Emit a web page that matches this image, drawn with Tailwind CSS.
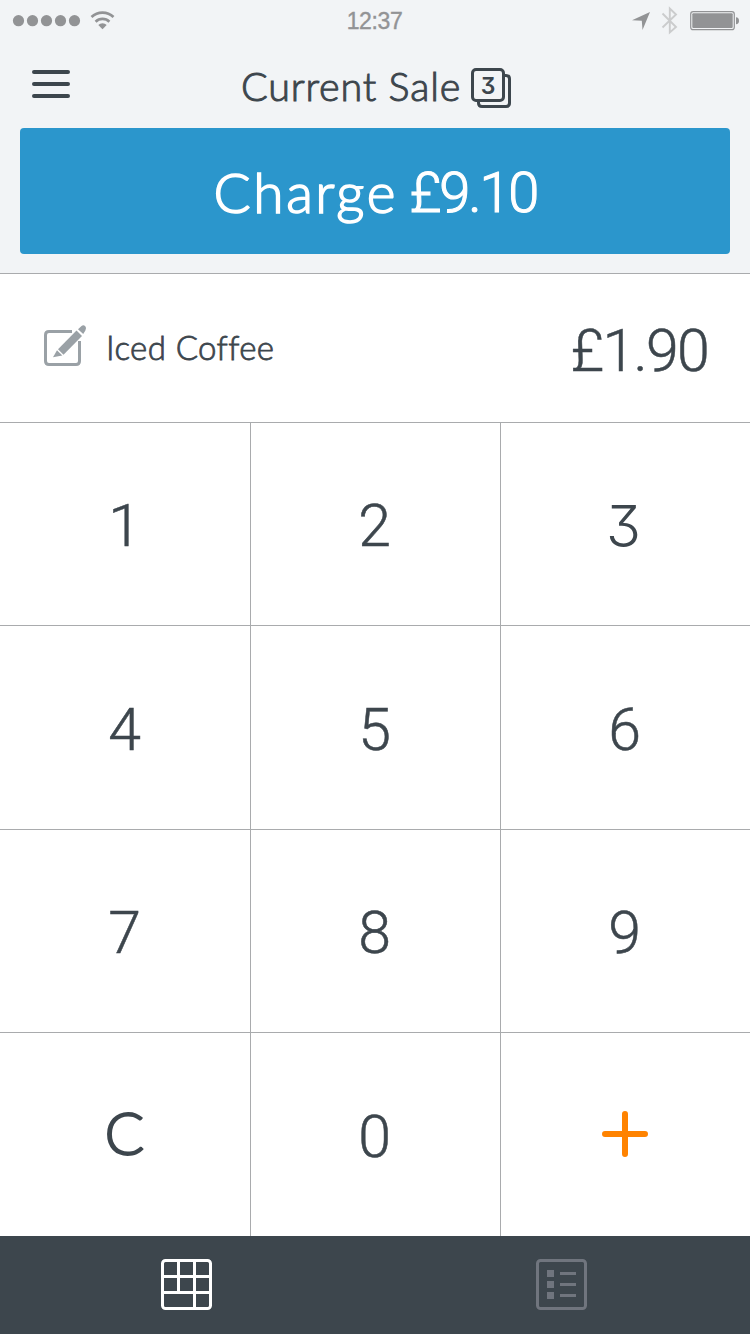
<!DOCTYPE html>
<html lang="en">
<head>
<meta charset="utf-8">
<title>Current Sale</title>
<script src="https://cdn.jsdelivr.net/npm/@tailwindcss/browser@4"></script>
</head>
<body class="w-[750px] h-[1334px] overflow-hidden bg-white flex flex-col text-[#3d464d] font-['Lato',sans-serif]">
  <header class="h-[274px] shrink-0 bg-[#f2f4f6] border-b border-[#a9abad] flex flex-col">
    <div class="h-10 grid grid-cols-3 items-center">
      <svg class="block" width="130" height="40" fill="#929395">
        <circle cx="18.5" cy="20.7" r="5.6"/><circle cx="32.5" cy="20.7" r="5.6"/><circle cx="46.5" cy="20.7" r="5.6"/><circle cx="60.5" cy="20.7" r="5.6"/><circle cx="74.5" cy="20.7" r="5.6"/>
        <path d="M91.500 17A16 16 0 0 1 113.500 17M95.600 21.700A10 10 0 0 1 109.400 21.700" fill="none" stroke="#929395" stroke-width="2.700"/>
        <path d="M98.300 25A6 6 0 0 1 106.700 25L102.500 29.200Z"/>
      </svg>
      <div class="h-10 leading-10 text-center text-[23px] text-[#929395] font-['Liberation_Sans',sans-serif] [-webkit-text-stroke:0.4px_#929395] tracking-[-0.4px] pt-[1px] pr-[1px]">12:37</div>
      <svg class="block justify-self-end" width="130" height="40" viewBox="620 0 130 40">
        <path d="M650 12L632 20.200L641.800 20.700L642.500 30Z" fill="#929395"/>
        <path d="M662.500 13.500L676 27L669.800 32.500V8.500L676 14.500L662.500 27.500" fill="none" stroke="#cbcccd" stroke-width="1.900"/>
        <rect x="690.700" y="11.700" width="43.600" height="18" rx="2.500" fill="none" stroke="#929395" stroke-width="1.200"/>
        <rect x="692.300" y="13.300" width="40.400" height="14.800" rx="1" fill="#929395"/>
        <path d="M736 17.200Q739 17.600 739 20.700Q739 23.800 736 24.200Z" fill="#929395"/>
      </svg>
    </div>
    <div class="h-[88px] flex items-center">
      <svg class="block w-[209px] h-[88px] shrink-0" viewBox="0 40 209 88" stroke="#3d464d" stroke-width="4" stroke-linecap="round"><path d="M34 72H68M34 84H68M34 96H68"/></svg>
      <h1 class="w-[262px] h-[88px] leading-[92px] pl-[32px] text-[39.500px] font-light tracking-[0.8px] [-webkit-text-stroke:1px_#3d464d] whitespace-nowrap">Current Sale</h1>
      <div class="relative w-10 h-10 mt-[7px] shrink-0">
        <svg class="block" width="40" height="40" fill="none" stroke="#3d464d" stroke-width="3"><rect x="1.500" y="1.500" width="31" height="31" rx="3.500"/><path d="M34 7.500H35Q38.500 7.500 38.500 11V35Q38.500 38.500 35 38.500H11Q7.500 38.500 7.500 35V34"/></svg>
        <span class="absolute left-0 top-0 w-[34px] h-[34px] leading-[36px] text-center text-[23px] font-semibold font-['Inter',sans-serif] [font-feature-settings:'cv09']">3</span>
      </div>
    </div>
    <button class="flex justify-center mx-5 h-[126px] rounded bg-[#2b96cc] text-white text-[55px] leading-[128px] whitespace-pre"><span class="w-[196px] font-light tracking-[2.600px] [-webkit-text-stroke:1.600px_white] text-left">Charge</span><span class="w-[127px] leading-[130px] text-[56px] text-left font-['Roboto',sans-serif] font-light tracking-[-2.200px] [-webkit-text-stroke:1.1px_white]">£9.10</span></button>
  </header>

  <section class="h-[148px] shrink-0 flex items-center justify-between pl-11 pr-[42px]">
    <div class="flex items-center">
      <svg class="block mb-1" width="44" height="44" viewBox="44 324 44 44" fill="none">
        <path d="M72 331.500H49Q45.500 331.500 45.500 335V361Q45.500 364.500 49 364.500H76Q79.500 364.500 79.500 361V341" stroke="#9aa1a6" stroke-width="3"/>
        <path d="M58 349.300L76.500 330.500L82 336L63.500 354.800Z" fill="#9aa1a6"/>
        <path d="M57 350.200L62.300 355.500L53 357.200Z" fill="#9aa1a6"/>
        <path d="M78 329.200L81.500 325.900Q83.500 324.300 85.300 326.300Q87 328.400 85.400 330.400L83.200 334Z" fill="#9aa1a6"/>
      </svg>
      <span class="ml-[18px] text-[33px] leading-[146px] h-[148px] font-light tracking-[0.4px] [-webkit-text-stroke:0.8px_#3d464d]">Iced Coffee</span>
    </div>
    <span class="text-[59px] leading-[154px] h-[148px] font-light font-['Roboto',sans-serif] tracking-[-1.700px] [-webkit-text-stroke:0.5px_#3d464d]">£1.90</span>
  </section>

  <main class="h-[814px] shrink-0 grid grid-cols-[250px_250px_250px] grid-rows-[203px_204px_203px_204px] text-[59px] font-light font-['Roboto',sans-serif] text-center [-webkit-text-stroke:0.5px_#3d464d]">
    <div class="border-t border-[#a9abad] leading-[206px] pr-[1px]">1</div>
    <div class="border-t border-l border-[#a9abad] leading-[206px] pr-[2px]">2</div>
    <div class="border-t border-l border-[#a9abad] leading-[206px] pr-[4px] text-[57.500px] font-['Inter',sans-serif] [font-feature-settings:'cv09'] [-webkit-text-stroke:0]">3</div>
    <div class="border-t border-[#a9abad] leading-[208px] pr-[1px]">4</div>
    <div class="border-t border-l border-[#a9abad] leading-[208px] pr-[2px]">5</div>
    <div class="border-t border-l border-[#a9abad] leading-[208px] pr-[2px]">6</div>
    <div class="border-t border-[#a9abad] leading-[206px] pr-[1px]">7</div>
    <div class="border-t border-l border-[#a9abad] leading-[206px] pr-[2px]">8</div>
    <div class="border-t border-l border-[#a9abad] leading-[206px] pr-[2px]">9</div>
    <div class="border-t border-[#a9abad] leading-[200px] pr-[1px] font-['Lato',sans-serif] [-webkit-text-stroke:1.800px_#3d464d]">C</div>
    <div class="border-t border-l border-[#a9abad] leading-[208px] pr-[2px]">0</div>
    <div class="border-t border-l border-[#a9abad] flex items-center justify-center pb-[2px] pr-[1px]">
      <svg class="block" width="46" height="46" stroke="#ff8300" stroke-width="6" stroke-linecap="round"><path d="M23 3V43M3 23H43"/></svg>
    </div>
  </main>

  <nav class="h-[98px] shrink-0 bg-[#3d464d] flex pb-[2px]">
    <div class="w-[373px] flex items-center justify-center">
      <svg class="block" width="51" height="51" fill="none" stroke="#fff" stroke-width="3"><rect x="1.500" y="1.500" width="48" height="48" rx="3"/><path d="M1.500 17.500H49.500M1.500 33.500H49.500M17.500 1.500V33.500M33.500 1.500V49.500"/></svg>
    </div>
    <div class="w-[377px] flex items-center justify-center">
      <svg class="block" width="51" height="51" fill="none" stroke="#70757e" stroke-width="3"><rect x="1.500" y="1.500" width="48" height="48" rx="3"/><path d="M24 14.500H40M24 25.500H40M24 36.500H40"/><path d="M11 14.500H18M11 25.500H18M11 36.500H18" stroke-width="7"/></svg>
    </div>
  </nav>
</body>
</html>
